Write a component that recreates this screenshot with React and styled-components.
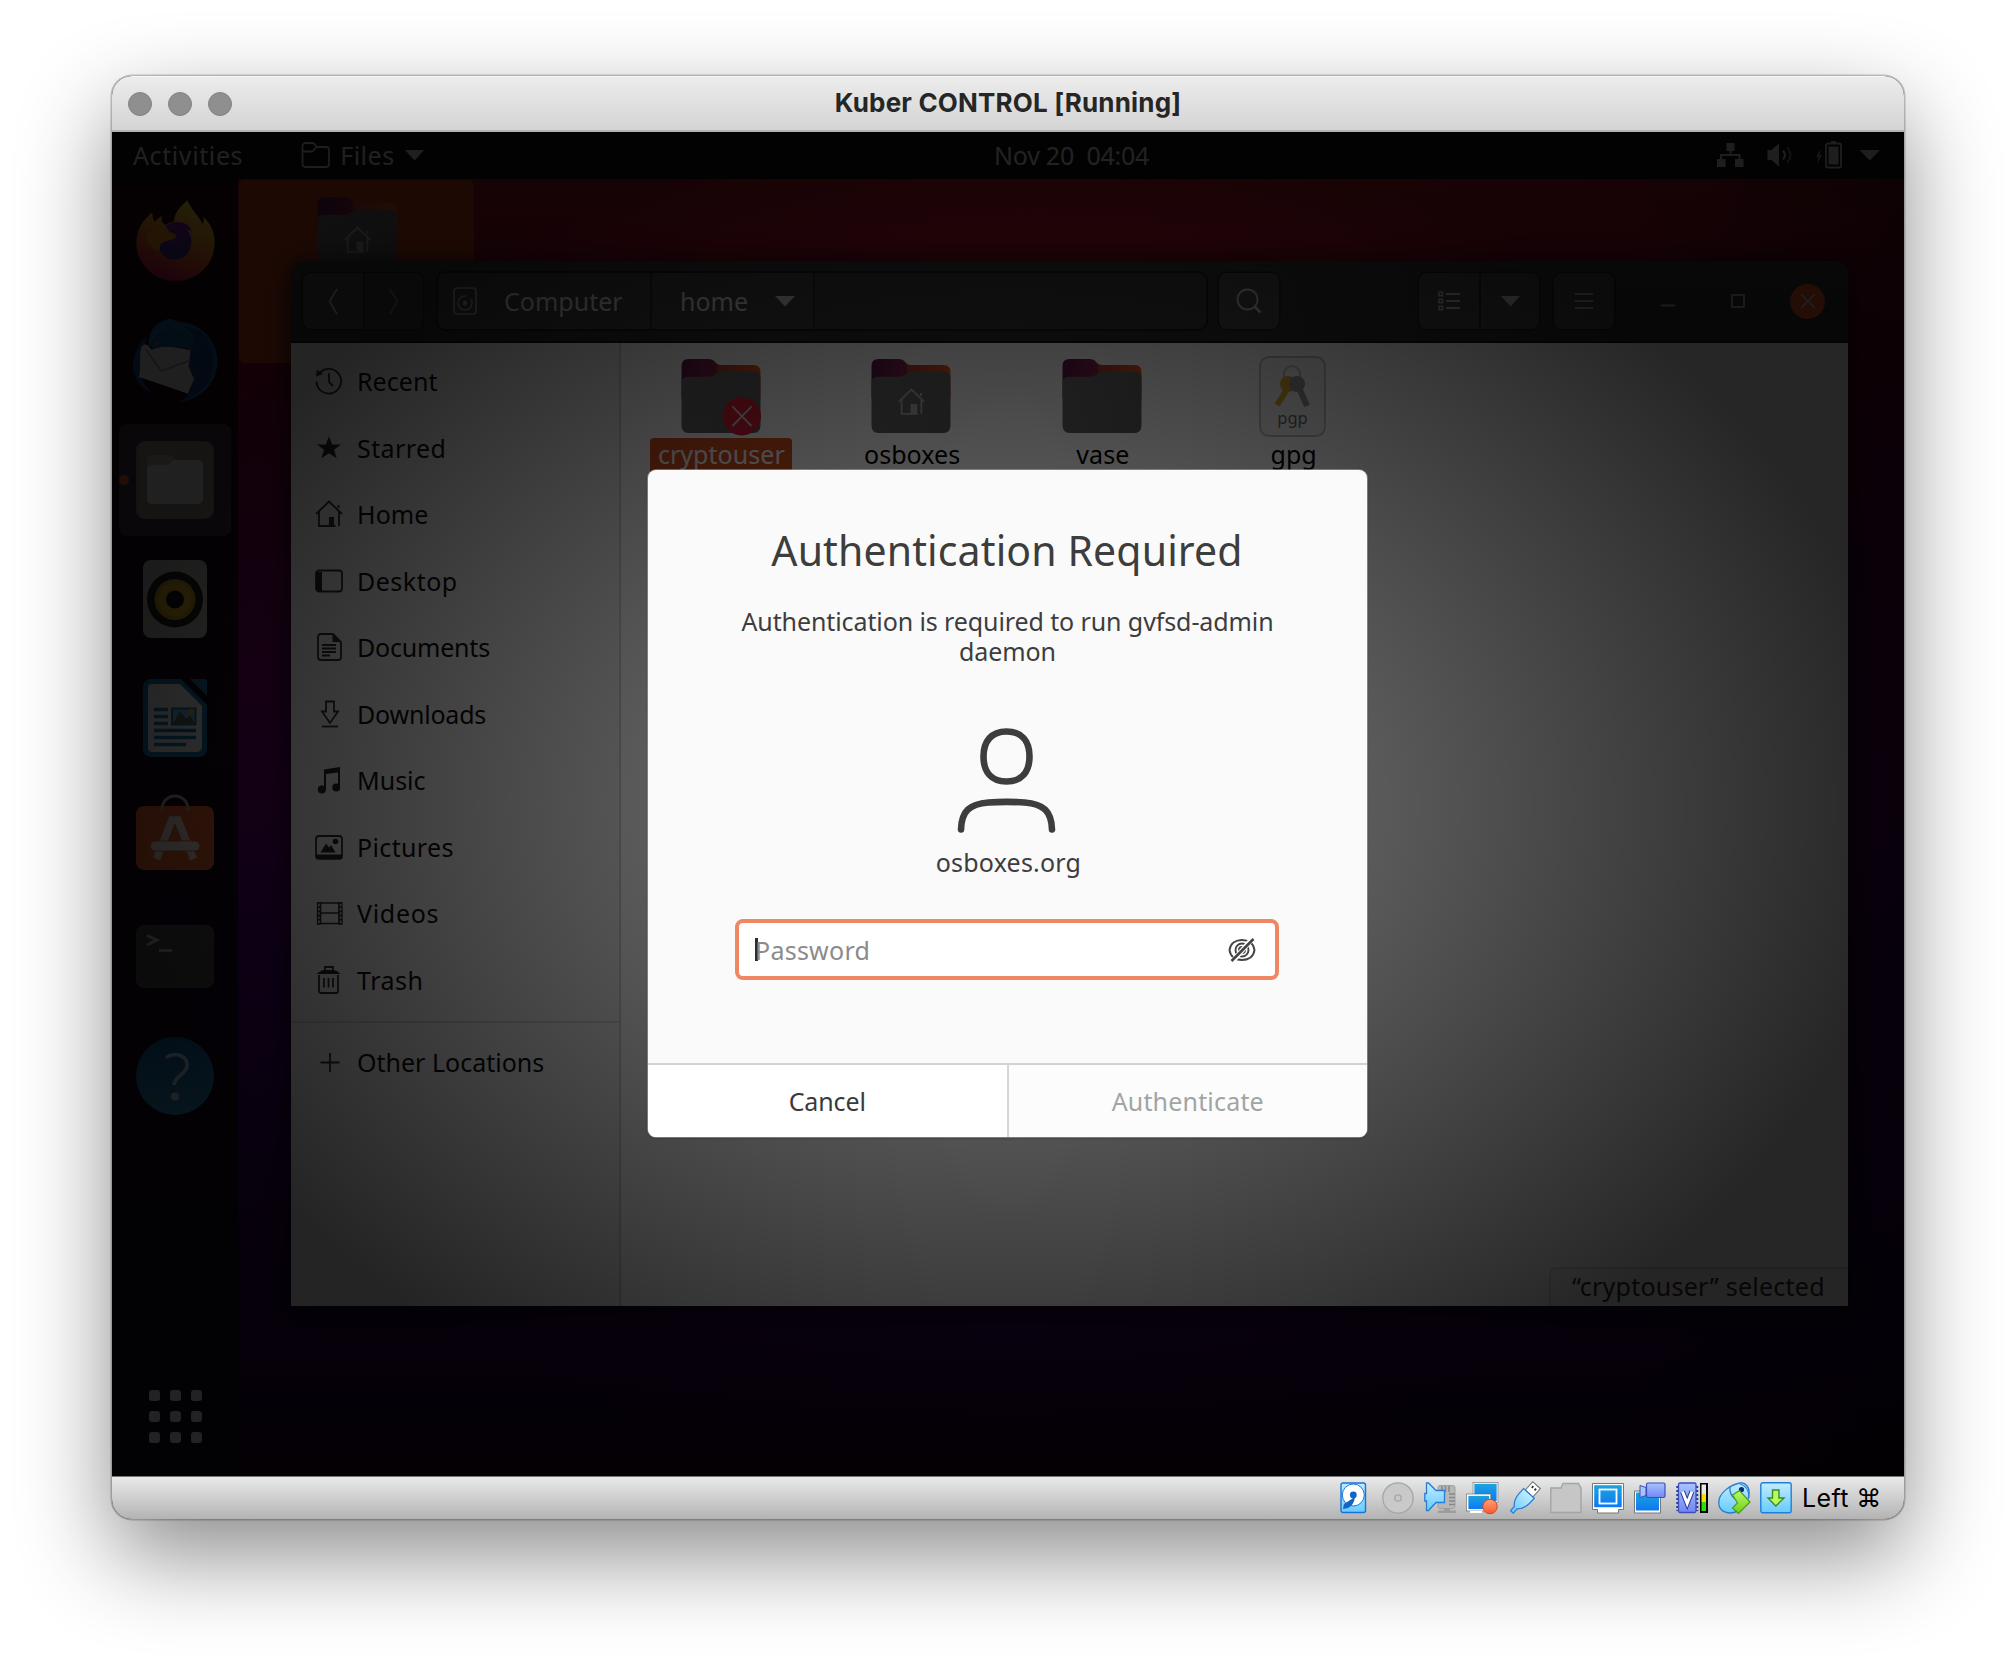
import React from "react";
import styled, { createGlobalStyle } from "styled-components";

const Global = createGlobalStyle`
  * { box-sizing: border-box; }
  body { margin: 0; background: #fff; overflow: hidden; }
`;

const GUEST_FONT = `"Noto Sans", "Open Sans", sans-serif`;
const HOST_FONT = `Inter, "Liberation Sans", sans-serif`;

/* ---------- host window ---------- */

const Page = styled.div`
  width: 2016px;
  height: 1666px;
  padding: 76px 112px 0;
  background: #fff;
  overflow: hidden;
`;
const HostWindow = styled.main`
  width: 1792px;
  height: 1443px;
  display: flex;
  flex-direction: column;
  border-radius: 20px;
  overflow: hidden;
  background: #000;
  box-shadow: 0 0 0 1.5px rgba(0, 0, 0, 0.22), 0 36px 92px rgba(0, 0, 0, 0.46);
`;
const TitleBar = styled.header`
  flex: none;
  height: 56px;
  padding: 0 16px;
  display: grid;
  grid-template-columns: 1fr auto 1fr;
  align-items: center;
  background: linear-gradient(#ececec, #d4d4d4);
  border-top: 1px solid #f6f6f6;
  border-bottom: 2px solid #b4b4b4;
`;
const TrafficLights = styled.div`
  display: flex;
  gap: 16px;
`;
const Light = styled.span`
  width: 24px;
  height: 24px;
  border-radius: 50%;
  background: #8f8f8f;
  border: 1px solid #838383;
`;
const HostTitle = styled.h1`
  margin: 0 0 2px;
  font: 700 26px/32px ${HOST_FONT};
  letter-spacing: 0.18px;
  color: #262626;
  white-space: nowrap;
`;
const StatusBar = styled.footer`
  flex: none;
  height: 43px;
  padding-right: 25px;
  display: flex;
  align-items: center;
  justify-content: flex-end;
  gap: 10px;
  background: linear-gradient(#e9e9e9, #cfcfcf 50%, #b3b3b3);
  border-top: 1px solid #777;
`;
const StatusIcon = styled.svg`
  width: 32px;
  height: 32px;
  flex: none;
  overflow: visible;
`;
const HostKey = styled.span`
  width: 77px;
  font: 400 25px/32px ${HOST_FONT};
  letter-spacing: 0.4px;
  color: #000;
  white-space: nowrap;
`;

/* ---------- guest screen ---------- */

const Screen = styled.section`
  position: relative;
  flex: none;
  height: 1344px;
  display: flex;
  flex-direction: column;
  font: 400 25px/34px ${GUEST_FONT};
  overflow: hidden;
  background:
    linear-gradient(90deg, transparent 85%, rgba(10, 0, 20, 0.4)),
    radial-gradient(ellipse 700px 300px at 1180px 40px, rgba(210, 20, 30, 0.18), transparent),
    linear-gradient(#98181e 0%, #920e26 8%, #80002e 18%, #6c004c 30%, #600066 48%, #400068 62%, #300054 80%, #20003a 92%, #1c0018 100%);
`;
const TopBar = styled.nav`
  flex: none;
  height: 47px;
  padding: 0 21px 1px;
  display: grid;
  grid-template-columns: 861px auto 1fr;
  align-items: center;
  background: #0c0c0c;
  color: #d4d4d4;
`;
const BarGroup = styled.div`
  display: flex;
  align-items: center;
  justify-content: ${(p) => (p.$end ? "flex-end" : "flex-start")};
`;
const AppMenu = styled.div`
  display: flex;
  align-items: center;
  margin-left: 58px;
  gap: 10px;
`;
const Text = styled.span`
  white-space: pre;
  letter-spacing: ${(p) => p.$track || 0}px;
`;
const Desktop = styled.div`
  flex: 1;
  display: flex;
  align-items: flex-start;
`;
const Dock = styled.aside`
  width: 126px;
  height: 100%;
  padding-top: 3px;
  display: flex;
  flex-direction: column;
  align-items: center;
  background: rgba(12, 8, 16, 0.86);
`;
const DockItem = styled.div`
  flex: none;
  width: 112px;
  height: 112px;
  margin: 3.6px 0;
  display: flex;
  align-items: center;
  justify-content: center;
  position: relative;
  border-radius: 8px;
  background: ${(p) => (p.$active ? "rgba(255,255,255,.16)" : "none")};
`;
const RunningDot = styled.i`
  position: absolute;
  left: 0;
  top: 51px;
  width: 10px;
  height: 10px;
  border-radius: 50%;
  background: #e95420;
`;
const AppsGrid = styled.div`
  margin: auto 0 33px;
  display: grid;
  grid-template-columns: repeat(3, 11px);
  gap: 10px;
`;
const AppsDot = styled.i`
  height: 11px;
  border-radius: 3px;
  background: #e2e2e2;
`;
const HomeShortcut = styled.div`
  margin: 1px 0 0 1px;
  width: 235px;
  height: 183px;
  padding-top: 16px;
  display: flex;
  justify-content: center;
  align-items: flex-start;
  border-radius: 6px;
  background: #c23c18;
`;

/* ---------- file manager ---------- */

const FileWindow = styled.section`
  position: absolute;
  left: 179px;
  top: 129px;
  width: 1557px;
  height: 1045px;
  display: flex;
  flex-direction: column;
  border-radius: 12px 12px 0 0;
  overflow: hidden;
  box-shadow: 0 4px 26px 6px rgba(0, 0, 0, 0.6);
`;
const HeaderBar = styled.div`
  flex: none;
  height: 82px;
  padding: 12px 23px 12px 12px;
  display: flex;
  align-items: stretch;
  background: linear-gradient(#353535, #2d2d2d);
  border-bottom: 2px solid #111;
  color: #dedede;
`;
const ButtonGroup = styled.div`
  display: flex;
  margin-left: ${(p) => p.$left || 0}px;
  border-radius: 8px;
  overflow: hidden;
  box-shadow: 0 0 0 1.5px #1c1c1c;
`;
const ToolButton = styled.div`
  width: 60px;
  display: flex;
  align-items: center;
  justify-content: center;
  background: ${(p) => (p.$off ? "#3b3b3b" : "#484848")};
  & + & { border-left: 2px solid #242424; }
`;
const PathBar = styled.div`
  width: 768px;
  margin-left: 15px;
  display: flex;
  background: #3a3a3a;
  border-radius: 8px;
  overflow: hidden;
  box-shadow: 0 0 0 2px #1a1a1a;
`;
const PathSegment = styled.div`
  width: ${(p) => p.$w}px;
  padding-left: ${(p) => p.$pad}px;
  display: flex;
  align-items: center;
  gap: 27px;
  background: #414141;
  border-right: 2px solid #262626;
`;
const Controls = styled.div`
  margin-left: auto;
  display: flex;
  align-items: center;
`;
const ControlButton = styled.div`
  width: ${(p) => (p.$close ? 35 : 14)}px;
  height: 35px;
  margin-left: ${(p) => p.$left || 0}px;
  display: flex;
  align-items: center;
  justify-content: center;
  border-radius: 50%;
  background: ${(p) => (p.$close ? "#e95420" : "none")};
`;
const FileBody = styled.div`
  flex: 1;
  display: flex;
  background: #fdfdfd;
`;
const Sidebar = styled.div`
  width: 330px;
  padding-top: 5px;
  background: #f2f2f2;
  border-right: 2px solid #d2d2d2;
  color: #0c0c0c;
`;
const Place = styled.div`
  height: 66.5px;
  padding-left: 24px;
  display: flex;
  align-items: center;
  gap: 14px;
`;
const Divider = styled.hr`
  height: 2px;
  margin: 8px 0 6px;
  border: 0;
  background: #d4d4d4;
`;
const FilePane = styled.div`
  flex: 1;
  display: flex;
  flex-direction: column;
  justify-content: space-between;
`;
const FileGrid = styled.div`
  display: grid;
  grid-template-columns: repeat(6, 190.75px);
  padding: 13px 0 0 5px;
`;
const FileItem = styled.div`
  display: flex;
  flex-direction: column;
  align-items: center;
`;
const Thumb = styled.div`
  height: 82px;
  margin-right: 1.5px;
  display: flex;
  align-items: center;
`;
const FileName = styled.span`
  height: 60px;
  padding: 0 7.5px;
  line-height: 32px;
  border-radius: 4px;
  letter-spacing: 0.05px;
  background: ${(p) => (p.$selected ? "#d9521f" : "none")};
  color: ${(p) => (p.$selected ? "#fff" : "#000")};
`;
const SelectionStatus = styled.div`
  align-self: flex-end;
  width: 299px;
  height: 39px;
  padding-left: 21px;
  line-height: 34px;
  letter-spacing: 0.25px;
  color: #2c2c2c;
  border: 2px solid #dcdcdc;
  border-right: 0;
  border-bottom: 0;
  border-radius: 8px 0 0 0;
  white-space: nowrap;
  background: #f6f6f6;
`;

/* ---------- modal ---------- */

const Vignette = styled.div`
  position: absolute;
  inset: 0;
  display: flex;
  align-items: center;
  justify-content: center;
  background: radial-gradient(ellipse closest-side, rgba(0, 0, 0, 0.5), rgba(0, 0, 0, 0.85));
`;
const Dialog = styled.div`
  width: 719px;
  height: 667px;
  margin: 0 2px 1px 0;
  display: flex;
  flex-direction: column;
  align-items: center;
  border-radius: 8px;
  overflow: hidden;
  background: #fafafa;
  color: #3d3d3d;
  box-shadow: 0 0 0 1px rgba(180, 180, 180, 0.5), 0 1px 3px rgba(0, 0, 0, 0.3);
`;
const DialogTitle = styled.h2`
  margin: 55px 0 0;
  font: 400 41px/50px ${GUEST_FONT};
  letter-spacing: 0.12px;
`;
const DialogBody = styled.p`
  width: 560px;
  margin: 32px 0 62px 1px;
  line-height: 29.7px;
  letter-spacing: -0.1px;
  text-align: center;
`;
const UserName = styled.span`
  margin: 12px 0 40px 3px;
  letter-spacing: 0.2px;
`;
const PasswordField = styled.div`
  width: 544px;
  height: 61px;
  padding: 0 19px 0 16px;
  display: flex;
  align-items: center;
  border: 4px solid #f08763;
  border-radius: 8px;
  background: #fff;
  color: #8b8b8b;
`;
const Caret = styled.i`
  width: 3px;
  height: 23px;
  margin-right: -3px;
  background: #2d2d2d;
`;
const Placeholder = styled.span`
  flex: 1;
  letter-spacing: 0.25px;
`;
const DialogActions = styled.div`
  width: 100%;
  height: 74px;
  margin-top: auto;
  display: grid;
  grid-template-columns: 1fr 1fr;
  border-top: 2px solid #d2d2d0;
`;
const Action = styled.div`
  display: flex;
  align-items: center;
  justify-content: center;
  letter-spacing: ${(p) => (p.$off ? 0.18 : -0.1)}px;
  background: ${(p) => (p.$off ? "#fcfcfc" : "#fff")};
  color: ${(p) => (p.$off ? "#a0a5a3" : "#3a3a3a")};
  & + & { border-left: 2px solid #d6d6d6; }
`;

/* ---------- icons ---------- */

const Triangle = ({ w = 20, h = 10.5, fill = "#d0d0d0" }) => (
  <svg width={w} height={h} viewBox={`0 0 ${w} ${h}`}>
    <path d={`M0 0H${w}L${w / 2} ${h}Z`} fill={fill} />
  </svg>
);

const HouseLines = () => (
  <>
    <path d="M1 14 L14 1.5 L27 14" />
    <path d="M4 11.500V26H20.500M24 11.500V26" />
    <path d="M23.500 5v3" />
  </>
);

const Folder = ({ home, denied }) => (
  <svg width="82" height="78" viewBox="0 -1 82 79">
    <defs>
      <linearGradient id="fback" x1="0" x2="1" y1="0" y2="0">
        <stop offset="0" stopColor="#581a48" />
        <stop offset=".44" stopColor="#8a1f4c" />
        <stop offset=".46" stopColor="#b03c2c" />
        <stop offset="1" stopColor="#e95420" />
      </linearGradient>
      <linearGradient id="ffront" x1="0" x2="1" y1="0" y2="1">
        <stop offset="0" stopColor="#6c6c6c" />
        <stop offset="1" stopColor="#5c5c5c" />
      </linearGradient>
    </defs>
    <path d="M1 7Q1 0 8 0H28Q33 0 35 3Q37 6 40 6H74Q81 6 81 13V40H1Z" fill="url(#fback)" />
    <path d="M1 24Q1 18 8 18H28Q33 18 36 15Q38 13 42 13H74Q81 13 81 20V67Q81 75 73 75H9Q1 75 1 67Z" fill="url(#ffront)" />
    {home && (
      <g transform="translate(27.500 29.500)" fill="none" stroke="#b4b4b4" strokeWidth="1.800">
        <HouseLines />
        <path d="M14 17h5v8h-5z" fill="#b4b4b4" />
      </g>
    )}
    {denied && (
      <>
        <circle cx="62" cy="58" r="19.500" fill="#dc1d36" />
        <path d="M52.500 48L72 68M72 48L52.500 68" stroke="#e4c9cc" strokeWidth="2" fill="none" />
      </>
    )}
  </svg>
);

const PgpFile = () => (
  <svg width="67" height="82" viewBox="0 0 67 82">
    <rect x="1" y="1" width="65" height="79" rx="9" fill="#f4f4f4" stroke="#bdbdbd" strokeWidth="1.800" />
    <path d="M25 23V18a8 8 0 0 1 16 0v9" fill="none" stroke="#c2c2c2" strokeWidth="2" />
    <path d="M27 35L18 49" stroke="#d9ab2c" strokeWidth="6" />
    <circle cx="29" cy="28" r="8" fill="#d9ab2c" />
    <path d="M41 34L48 50" stroke="#969696" strokeWidth="6" />
    <circle cx="38" cy="28" r="8" fill="#969696" />
    <text x="33.500" y="68" textAnchor="middle" fontFamily={GUEST_FONT} fontSize="16.500" fill="#6a6a6a">pgp</text>
  </svg>
);

const placeIcons = {
  Recent: (
    <g fill="none" stroke="#303030" strokeWidth="1.800">
      <path d="M3.500 7.500A12.300 12.300 0 1 1 1.500 14.500" />
      <path d="M14 6v9l4 4" />
      <path d="M1 9.500L2 2.500L8 7Z" fill="#303030" stroke="none" />
    </g>
  ),
  Starred: <path d="M14 2.500l3.200 8H26l-7 5.300 2.600 8.500L14 19.200l-7.600 5.100L9 15.800 2 10.500h8.800z" fill="#262626" />,
  Home: (
    <g fill="none" stroke="#303030" strokeWidth="1.800">
      <HouseLines />
      <path d="M14 17h5v9h-5z" fill="#303030" stroke="none" />
    </g>
  ),
  Desktop: (
    <g fill="none" stroke="#303030" strokeWidth="1.800">
      <rect x="1" y="3.500" width="26" height="21" rx="3" />
      <path d="M1 5h6v19H3l-2-2z" fill="#262626" stroke="none" />
    </g>
  ),
  Documents: (
    <g fill="none" stroke="#303030" strokeWidth="1.800">
      <path d="M6 1h12l8 8v15a3 3 0 0 1-3 3H6a3 3 0 0 1-3-3V4a3 3 0 0 1 3-3z" />
      <path d="M17.500 1v8H26z" fill="#303030" stroke="none" />
      <path d="M7 12h14M7 15.500h14M7 19h14M7 22.500h8" />
    </g>
  ),
  Downloads: (
    <g fill="none" stroke="#303030" strokeWidth="1.800">
      <path d="M11 1.500h8v10h4l-8 11.500-8-11.500h4z" />
      <path d="M7 26.500h16" />
    </g>
  ),
  Music: (
    <g fill="#262626">
      <path d="M9 3.500L25 1v20h-2V6.500L11 8v16H9z" />
      <circle cx="6.800" cy="23.500" r="4" />
      <circle cx="21.200" cy="21.500" r="4" />
    </g>
  ),
  Pictures: (
    <g>
      <rect x="1" y="3" width="26" height="22.500" rx="3" fill="none" stroke="#303030" strokeWidth="1.800" />
      <path d="M0.500 21.500h27v3a2 2 0 0 1-2 2h-23a2 2 0 0 1-2-2zM5.500 19.500L11 10.500l3 4 2-2.500 4.500 7.500z" fill="#262626" />
      <circle cx="20.500" cy="8.500" r="2.800" fill="#262626" />
    </g>
  ),
  Videos: (
    <g fill="none" stroke="#303030" strokeWidth="1.700">
      <path d="M5.500 3V25.500M24 3V25.500M5.500 4H24M5.500 14H24M5.500 24.500H24" />
      <path d="M2.500 3V25.500M27 3V25.500" strokeWidth="1.300" />
      <path d="M4 3V26M25.500 3V26" strokeWidth="3" strokeDasharray="1.800 2.400" />
    </g>
  ),
  Trash: (
    <g fill="none" stroke="#303030" strokeWidth="1.800">
      <path d="M4 9V25a2 2 0 0 0 2 2H21a2 2 0 0 0 2-2V9" />
      <path d="M9 12v9.500M13.500 12v9.500M18 12v9.500" />
      <path d="M1.500 8Q6 4.500 8 4h11q3 .5 6.500 4z" fill="#262626" stroke="none" />
      <path d="M10 4V1h8v3" />
    </g>
  ),
  "Other Locations": <path d="M15 5v19M5.500 14.500h19" stroke="#303030" strokeWidth="1.800" />,
};

const places = [
  ["Recent", 0.05], ["Starred", 0.4], ["Home", 0.1], ["Desktop", 0.5], ["Documents", -0.2],
  ["Downloads", -0.2], ["Music", 0], ["Pictures", 0.35], ["Videos", 0.7], ["Trash", 0.5],
];

const PlaceRow = ({ name, track }) => (
  <Place>
    <svg width="28" height="28" viewBox="0 0 28 28">{placeIcons[name]}</svg>
    <Text $track={track}>{name}</Text>
  </Place>
);

const FirefoxIcon = () => (
  <svg width="79" height="84" viewBox="77 59 237 252">
    <defs>
      <linearGradient id="ff1" x1=".75" y1="0" x2=".35" y2="1">
        <stop offset="0" stopColor="#e8d83c" />
        <stop offset=".35" stopColor="#e8a024" />
        <stop offset=".65" stopColor="#e45c26" />
        <stop offset="1" stopColor="#bc0c58" />
      </linearGradient>
      <linearGradient id="ff2" x1=".6" y1="0" x2=".4" y2="1">
        <stop offset="0" stopColor="#7c1ca4" />
        <stop offset="1" stopColor="#30307e" />
      </linearGradient>
    </defs>
    <path d="M125 97C128 105 126 116 133 124C140 116 148 110 156 107C151 120 156 130 166 134C176 126 184 124 191 124C192 98 208 80 231 60C240 84 264 104 277 132C281 124 281 116 279 109C302 130 313 158 313 186C313 252 260 302 196 302C130 302 78 250 78 190C78 150 95 120 125 97Z" fill="url(#ff1)" />
    <path d="M155 150C168 128 190 122 212 126C230 130 240 140 244 152L230 149C243 162 246 180 241 200C234 226 214 238 192 238C166 238 147 218 145 196Z" fill="url(#ff2)" />
    <path d="M108 165C122 158 135 148 152 147C158 140 158 135 157 128C168 138 176 150 178 156C190 158 200 163 197 170C190 180 166 180 156 187C148 193 146 200 148 210C122 205 108 190 108 165Z" fill="#e88e1c" />
  </svg>
);

const ThunderbirdIcon = () => (
  <svg width="86" height="84" viewBox="66 418 258 252">
    <path d="M110 470C75 500 60 550 75 590C85 615 105 632 128 640C112 625 98 610 92 588Z" fill="#18418c" />
    <path d="M118 500C108 462 140 424 176 418C195 420 205 430 216 428C270 432 322 480 322 548C322 610 270 662 206 667C228 655 240 645 244 630L252 590L236 560L244 505Z" fill="#17609c" />
    <path d="M236 560L244 505C262 470 240 450 216 440C280 440 316 490 312 550C308 610 265 650 215 665C235 650 248 625 256 590Z" fill="#153f80" />
    <path d="M95 500C105 488 118 496 124 510C150 496 190 500 242 512L236 560L252 598L234 642L130 606L86 592C96 570 84 530 95 500Z" fill="#d0d0d0" />
    <path d="M108 510L154 574L242 542" fill="none" stroke="#8a8a8a" strokeWidth="5" />
    <path d="M126 510C122 475 150 448 190 448C228 448 248 470 250 514C215 498 170 494 126 510Z" fill="#17548c" />
    <circle cx="141" cy="492" r="4" fill="#b86a1a" />
  </svg>
);

const FilesIcon = () => (
  <svg width="78" height="78" viewBox="0 0 78 78">
    <rect width="78" height="78" rx="9" fill="#7e7c6e" />
    <rect y="1" x="1" width="76" height="76" rx="8" fill="#8b897a" />
    <path d="M11 20q0-6 6-6h16q3 0 4 2l2 3h22q6 0 6 6v20H11z" fill="#acaba2" />
    <rect x="11" y="24" width="56" height="39" rx="5" fill="#dadada" />
    <path d="M30 26l8-7h24q5 0 5 6v10H30z" fill="#dadada" />
  </svg>
);

const RhythmboxIcon = () => (
  <svg width="64" height="78" viewBox="0 0 64 78">
    <rect width="64" height="78" rx="8" fill="#b8b8b4" />
    <circle cx="32" cy="39.500" r="28" fill="#1d1d1d" />
    <circle cx="32" cy="39.500" r="20.500" fill="#c59a17" />
    <circle cx="32" cy="39.500" r="17" fill="#d8ac24" />
    <circle cx="32" cy="39.500" r="9" fill="#111" />
  </svg>
);

const WriterIcon = () => (
  <svg width="64" height="79" viewBox="0 0 64 79">
    <path d="M8 0H38L64 26V70a8 8 0 0 1-8 8H8a8 8 0 0 1-8-8V8a8 8 0 0 1 8-8z" fill="#1672a8" />
    <path d="M47 0h14q3 0 3 3v14z" fill="#1a6fa0" />
    <path d="M9 5H37L59 27V68a5 5 0 0 1-5 5H9a4 4 0 0 1-4-4V9a4 4 0 0 1 4-4z" fill="#e8e8e8" />
    <path d="M11 30.500h14M11 37.500h14M11 44.500h14M11 51.500h42M11 58.500h42M11 65.500h32" stroke="#1672a8" strokeWidth="3.400" />
    <rect x="29" y="29.500" width="23.500" height="16" fill="#69b4e4" stroke="#1672a8" strokeWidth="2" />
    <path d="M30 44.500l7-12 6 7 4-3 5 8z" fill="#5a6650" />
    <circle cx="48.500" cy="32.500" r="3" fill="#e0b024" />
  </svg>
);

const SoftwareIcon = () => (
  <svg width="78" height="96" viewBox="0 -16 78 96">
    <rect width="78" height="64" rx="8" fill="#e8602c" />
    <path d="M26 5V3a13 13 0 0 1 26 0v2" fill="none" stroke="#b8a690" strokeWidth="3" />
    <path d="M20.500 53L36 14h6L57.500 53" fill="none" stroke="#e9d8d0" strokeWidth="7.500" />
    <rect x="12" y="34.500" width="54" height="11" fill="#e8602c" />
    <rect x="14.500" y="35.500" width="49" height="9" rx="4.500" fill="#f2e6e0" />
  </svg>
);

const TerminalIcon = () => (
  <svg width="78" height="63" viewBox="0 0 78 63">
    <rect width="78" height="63" rx="8" fill="#3d3d3d" />
    <rect x=".75" y=".75" width="76.500" height="61.500" rx="7.500" fill="#474747" stroke="#545454" />
    <path d="M11 10.500L21 15L11 20M23 25.500H36" fill="none" stroke="#c4c4c4" strokeWidth="2.600" />
  </svg>
);

const HelpIcon = () => (
  <svg width="78" height="78" viewBox="0 0 78 78">
    <defs>
      <linearGradient id="hp" x1="0" x2="0" y1="0" y2="1">
        <stop offset="0" stopColor="#0e609e" />
        <stop offset="1" stopColor="#2888bc" />
      </linearGradient>
    </defs>
    <circle cx="39" cy="39" r="39" fill="url(#hp)" />
    <path d="M30 20.500C40 14 52 19 51 29C50 38 39 38 38 48" fill="none" stroke="#c8dce8" strokeWidth="3.600" />
    <circle cx="39" cy="59.500" r="4" fill="#c8dce8" />
  </svg>
);

const dockApps = [
  { key: "firefox", Icon: FirefoxIcon },
  { key: "thunderbird", Icon: ThunderbirdIcon },
  { key: "files", Icon: FilesIcon, active: true },
  { key: "rhythmbox", Icon: RhythmboxIcon },
  { key: "writer", Icon: WriterIcon },
  { key: "software", Icon: SoftwareIcon },
  { key: "terminal", Icon: TerminalIcon },
  { key: "help", Icon: HelpIcon },
];

const SystemIcons = () => (
  <svg width="166" height="28" viewBox="0 0 166 28">
    <g fill="#c6c6c6" stroke="none">
      <path d="M9.500 2h8v8h-8zM0 18h8.500v8H0zM18 18h8.500v8H18z" />
      <path d="M4 19v-5h18.500v5M13.500 9v5" fill="none" stroke="#c6c6c6" strokeWidth="2" />
      <path d="M50.500 9h4l7.500-6.500v23L54.500 19h-4z" />
      <path d="M66 9.500q4 4.500 0 9" fill="none" stroke="#c6c6c6" strokeWidth="2" />
      <path d="M70 6q7 8 0 16" fill="none" stroke="#6e6e6e" strokeWidth="2" />
      <path d="M103.500 8l-4.500 8h2.500l-1.500 7 5-9h-2.500z" fill="#9a9a9a" />
      <path d="M114 0h5v3h-5zM111.500 5.500h10v18h-10z" />
      <rect x="109" y="2.500" width="15" height="24" rx="2" fill="none" stroke="#c6c6c6" strokeWidth="1.800" />
      <path d="M142.500 9h20.500l-10.250 10.500z" />
    </g>
  </svg>
);

const Chevron = ({ next }) => (
  <svg width="10" height="27" viewBox="0 0 10 27">
    <path d={next ? "M1 1L8.500 13.500L1 26" : "M9 1L1.500 13.500L9 26"} fill="none" stroke={next ? "#7c7c7c" : "#c8c8c8"} strokeWidth="1.700" />
  </svg>
);

/* status bar device indicators, each on a 32px grid */
const StatusDefs = () => (
  <defs>
    <linearGradient id="sky" x1="0" x2="0" y1="0" y2="1"><stop offset="0" stopColor="#c2ecff" /><stop offset="1" stopColor="#66cbff" /></linearGradient>
    <linearGradient id="blue" x1="0" x2="0" y1="0" y2="1"><stop offset="0" stopColor="#1ea4de" /><stop offset="1" stopColor="#0a78f4" /></linearGradient>
    <linearGradient id="peri" x1="0" x2="0" y1="0" y2="1"><stop offset="0" stopColor="#a8c4ff" /><stop offset="1" stopColor="#7286f4" /></linearGradient>
    <linearGradient id="lime" x1="0" x2="0" y1="0" y2="1"><stop offset="0" stopColor="#bcf86a" /><stop offset="1" stopColor="#6cd016" /></linearGradient>
    <linearGradient id="coral" x1="0" x2="0" y1="0" y2="1"><stop offset="0" stopColor="#ffa078" /><stop offset="1" stopColor="#ff5a2c" /></linearGradient>
  </defs>
);

const statusIcons = {
  disk: (
    <>
      <StatusDefs />
      <rect x="1" y="1" width="24.500" height="29.500" rx="2" fill="url(#sky)" stroke="#1874d8" strokeWidth="1.400" />
      <circle cx="13.300" cy="13" r="11" fill="#fff" stroke="#1874d8" strokeWidth="1" />
      <circle cx="13.300" cy="13" r="3.400" fill="#1464c8" />
      <path d="M15 15Q14 23 8 26L3 27L4 22Q10 18 15 15z" fill="#1464c8" />
    </>
  ),
  optical: (
    <g fill="none" stroke="#a6a6a6" strokeWidth="1.300">
      <circle cx="16" cy="16" r="15.200" fill="#c9c9c9" />
      <circle cx="16" cy="16" r="3.200" />
    </g>
  ),
  audio: (
    <>
      <rect x="14" y="3.500" width="17" height="23" rx="2" fill="#b7b7b7" stroke="#a2a2a2" />
      <path d="M18 4v6M21.500 4v6M25 4v6M25 12h6M25 15.500h6M25 19h6M25 22.500h6" stroke="#888" strokeWidth="1.500" />
      <path d="M14 28.500h18v2.500H14zM20 26h6v3h-6z" fill="#9c9c9c" />
      <path d="M2.500 1H4.500L12 8.500H20.500V20.500H12L4.500 28.500H2.500V19H.8V11.500H2.500z" fill="url(#sky)" stroke="#2a7cd0" strokeWidth="1.300" />
    </>
  ),
  network: (
    <>
      <rect x="7.500" y="1" width="24" height="19" fill="url(#blue)" stroke="#f4f4f4" strokeWidth="1.800" />
      <rect x="7" y=".5" width="25" height="20" fill="none" stroke="#666" strokeWidth=".6" />
      <rect x="1.500" y="13" width="22.500" height="15" fill="url(#blue)" stroke="#fff" strokeWidth="1.800" />
      <rect x=".6" y="12" width="24" height="17" fill="none" stroke="#666" strokeWidth=".6" />
      <path d="M4 29h12v2H4z" fill="#fff" />
      <circle cx="24" cy="24.500" r="7.200" fill="url(#coral)" stroke="#dc4014" />
    </>
  ),
  usb: (
    <g transform="translate(-.5 2) rotate(42 16 16) scale(.93)">
      <rect x="11.500" y="-4" width="11" height="12" fill="#fff" stroke="#777" strokeWidth="1.200" />
      <path d="M14 -1h2v2.500h-2zM18 -1h2v2.500h-2z" fill="#333" />
      <path d="M9 8h15.500v7Q24 24 18.500 29v6h-4v-6Q9 24 9 15z" fill="url(#sky)" stroke="#2a7cd0" strokeWidth="1.300" />
    </g>
  ),
  shared: (
    <path d="M.8 6H11l2-4.500h15.500L31 6v24.500H.8z" fill="#c6c6c6" stroke="#a4a4a4" strokeWidth="1.400" />
  ),
  display: (
    <>
      <path d="M.5 1.500h31v26h-5v3.500h-21v-3.500h-5z" fill="#fff" stroke="#777" strokeWidth="1" />
      <rect x="2.200" y="3.200" width="27.500" height="22" fill="url(#blue)" />
      <rect x="7.500" y="7.500" width="17" height="14" fill="none" stroke="#fff" strokeWidth="1.800" />
    </>
  ),
  recording: (
    <>
      <path d="M.5 9h26v22H.5z" fill="#fff" stroke="#777" />
      <rect x="2" y="10.500" width="23" height="18" fill="url(#blue)" />
      <path d="M6 3.500l6 2v8l-6 2z" fill="#a8c4ff" stroke="#3a50b8" />
      <rect x="12.500" y="1" width="18.500" height="14.500" rx="1.500" fill="url(#peri)" stroke="#3a50b8" strokeWidth="1.200" />
    </>
  ),
  cpu: (
    <>
      <path d="M1.500 4v25M21 4v25" stroke="#2c3c9c" strokeWidth="2.500" strokeDasharray="2 2" />
      <rect x="2.500" y="1" width="17.500" height="29.500" rx="1.500" fill="url(#peri)" stroke="#3a50b8" strokeWidth="1.300" />
      <path d="M6.500 9.500l4.700 12 4.700-12" fill="none" stroke="#2c3c9c" strokeWidth="5" />
      <path d="M6.500 9.500l4.700 12 4.700-12" fill="none" stroke="#fff" strokeWidth="3" />
      <rect x="24" y="1" width="8" height="30" fill="#000" />
      <path d="M25.500 2.500h4.500v9.500h-4.500z" fill="#e8e8e8" />
      <path d="M25.500 12h4.500v8h-4.500z" fill="#f0e010" />
      <path d="M25.500 20h4.500v9h-4.500z" fill="#2cdc10" />
    </>
  ),
  mouse: (
    <>
      <path d="M22 1C28 0 32 6 31 13C30 20 24 30 13 31C4 31 .5 26 .8 20C1 11 12 3 22 1z" fill="url(#sky)" stroke="#2a7cd0" strokeWidth="1.300" />
      <path d="M12 5Q11 12 17 17M22 2q9 2 9 14" fill="none" stroke="#2a7cd0" strokeWidth="1.200" />
      <circle cx="23.500" cy="7.500" r="2.600" fill="#0c2c78" />
      <path d="M14.500 13l7-4.500L32 20l-11.500 11.500-6-5.500 5-5z" fill="url(#lime)" stroke="#4a9c14" strokeWidth="1.200" />
    </>
  ),
  keyboard: (
    <>
      <rect x=".8" y=".8" width="30.400" height="30" rx="2" fill="url(#sky)" stroke="#1f80d8" strokeWidth="1.400" />
      <path d="M12.500 8h6.500v8h5L15.800 24 8 16h4.500z" fill="#b6fa5e" stroke="#3c8c1c" strokeWidth="1.400" />
    </>
  ),
};

const UserIcon = () => (
  <svg width="100" height="105" viewBox="0.5 0 100 105" fill="none" stroke="#3d3d3d" strokeWidth="6.600" strokeLinecap="round">
    <path d="M50 3.500C65 3.500 73 13 73 28.500C73 44 65 53.500 50 53.500C35 53.500 27 44 27 28.500C27 13 35 3.500 50 3.500Z" />
    <path d="M4.500 101.500C5 83 13 76 32 74.500C44 73.700 56 73.700 68 74.500C87 76 95 83 95.500 101.500" />
  </svg>
);

const EyeOffIcon = () => (
  <svg width="28" height="24" viewBox="0 0 28 24" fill="none" stroke="#444" strokeWidth="1.900">
    <path d="M1.500 12C2.500 5 8 2 14 2S25.500 5 26.500 12C25.500 19 20 22 14 22S2.500 19 1.500 12Z" />
    <circle cx="14" cy="12" r="6.500" />
    <circle cx="14" cy="12" r="3" fill="#444" />
    <path d="M4 24L24 1" stroke="#fff" strokeWidth="5" />
    <path d="M3.500 23L25.500 1" strokeWidth="2.600" />
  </svg>
);

/* ---------- screen composition ---------- */

export default function App() {
  return (
    <Page>
      <Global />
      <HostWindow>
        <TitleBar>
          <TrafficLights>
            <Light /><Light /><Light />
          </TrafficLights>
          <HostTitle>Kuber CONTROL [Running]</HostTitle>
        </TitleBar>

        <Screen>
          <TopBar>
            <BarGroup>
              <Text $track={0.6}>Activities</Text>
              <AppMenu>
                <svg width="29" height="26" viewBox="0 0 29 26" fill="none" stroke="#c6c6c6" strokeWidth="1.800">
                  <path d="M1.500 4a3 3 0 0 1 3-3h7q1.500 0 2.500 1.500L15.500 5H25a3 3 0 0 1 3 3v14a3 3 0 0 1-3 3H4.500a3 3 0 0 1-3-3zM1.500 9.500h9q1.500 0 2.500-1.500l2.500-3" />
                </svg>
                <Text $track={0.5}>Files</Text>
                <Triangle w={19} />
              </AppMenu>
            </BarGroup>
            <Text $track={-0.25}>Nov 20  04:04</Text>
            <BarGroup $end><SystemIcons /></BarGroup>
          </TopBar>

          <Desktop>
            <Dock>
              {dockApps.map(({ key, Icon, active }) => (
                <DockItem key={key} $active={active}>
                  {active && <RunningDot />}
                  <Icon />
                </DockItem>
              ))}
              <AppsGrid>
                {Array.from({ length: 9 }, (_, i) => <AppsDot key={i} />)}
              </AppsGrid>
            </Dock>
            <HomeShortcut><Folder home /></HomeShortcut>
          </Desktop>

          <FileWindow>
            <HeaderBar>
              <ButtonGroup>
                <ToolButton><Chevron /></ToolButton>
                <ToolButton $off><Chevron next /></ToolButton>
              </ButtonGroup>
              <PathBar>
                <PathSegment $w={214} $pad={15}>
                  <svg width="24" height="28" viewBox="0 0 24 28" fill="none" stroke="#a8a8a8" strokeWidth="1.700">
                    <rect x="1" y="1" width="22" height="26" rx="3" />
                    <circle cx="12" cy="16" r="7" strokeWidth="1.500" strokeDasharray="38 6" strokeDashoffset="4" />
                    <circle cx="12" cy="16" r="2.400" fill="#a8a8a8" stroke="none" />
                  </svg>
                  <Text>Computer</Text>
                </PathSegment>
                <PathSegment $w={163} $pad={28}>
                  <Text>home</Text>
                  <Triangle />
                </PathSegment>
              </PathBar>
              <ButtonGroup $left={13}>
                <ToolButton>
                  <svg width="26" height="26" viewBox="0 0 26 26" fill="none" stroke="#c4c4c4" strokeWidth="1.800">
                    <circle cx="11.500" cy="11.500" r="10" />
                    <path d="M18.500 18.500l6 6" strokeWidth="2.600" />
                  </svg>
                </ToolButton>
              </ButtonGroup>
              <ButtonGroup $left={140}>
                <ToolButton>
                  <svg width="22" height="20" viewBox="0 0 22 20" fill="none" stroke="#c4c4c4" strokeWidth="1.800">
                    <path d="M8 3h14M8 10h14M8 17h14" strokeWidth="2.200" />
                    <path d="M1 1.200h3.500v3.500H1zM1 8.200h3.500v3.500H1zM1 15.200h3.500v3.500H1z" strokeWidth="1.500" />
                  </svg>
                </ToolButton>
                <ToolButton><Triangle w={19} /></ToolButton>
              </ButtonGroup>
              <ButtonGroup $left={15}>
                <ToolButton>
                  <svg width="18" height="18" viewBox="0 0 18 18" stroke="#b4b4b4" strokeWidth="1.800"><path d="M0 2h18M0 9h18M0 16h18" /></svg>
                </ToolButton>
              </ButtonGroup>
              <Controls>
                <ControlButton>
                  <svg width="14" height="14" viewBox="0 0 14 14" stroke="#bbb" strokeWidth="2"><path d="M0 11.500h14" /></svg>
                </ControlButton>
                <ControlButton $left={56}>
                  <svg width="14" height="14" viewBox="0 0 14 14" fill="none" stroke="#bbb" strokeWidth="1.800"><rect x="1" y="1" width="12" height="12" /></svg>
                </ControlButton>
                <ControlButton $left={45} $close>
                  <svg width="14" height="14" viewBox="0 0 14 14" stroke="#d4ccc8" strokeWidth="1.800"><path d="M.5.5l13 13M13.500.5l-13 13" /></svg>
                </ControlButton>
              </Controls>
            </HeaderBar>

            <FileBody>
              <Sidebar>
                {places.map(([name, track]) => <PlaceRow key={name} name={name} track={track} />)}
                <Divider />
                <PlaceRow name="Other Locations" track={0} />
              </Sidebar>
              <FilePane>
                <FileGrid>
                  <FileItem><Thumb><Folder denied /></Thumb><FileName $selected>cryptouser</FileName></FileItem>
                  <FileItem><Thumb><Folder home /></Thumb><FileName>osboxes</FileName></FileItem>
                  <FileItem><Thumb><Folder /></Thumb><FileName>vase</FileName></FileItem>
                  <FileItem><Thumb><PgpFile /></Thumb><FileName>gpg</FileName></FileItem>
                </FileGrid>
                <SelectionStatus>“cryptouser” selected</SelectionStatus>
              </FilePane>
            </FileBody>
          </FileWindow>

          <Vignette>
            <Dialog>
              <DialogTitle>Authentication Required</DialogTitle>
              <DialogBody>Authentication is required to run gvfsd-admin daemon</DialogBody>
              <UserIcon />
              <UserName>osboxes.org</UserName>
              <PasswordField>
                <Caret />
                <Placeholder>Password</Placeholder>
                <EyeOffIcon />
              </PasswordField>
              <DialogActions>
                <Action>Cancel</Action>
                <Action $off>Authenticate</Action>
              </DialogActions>
            </Dialog>
          </Vignette>
        </Screen>

        <StatusBar>
          {Object.entries(statusIcons).map(([key, art]) => (
            <StatusIcon key={key} viewBox="0 0 32 32">{art}</StatusIcon>
          ))}
          <HostKey>Left ⌘</HostKey>
        </StatusBar>
      </HostWindow>
    </Page>
  );
}
